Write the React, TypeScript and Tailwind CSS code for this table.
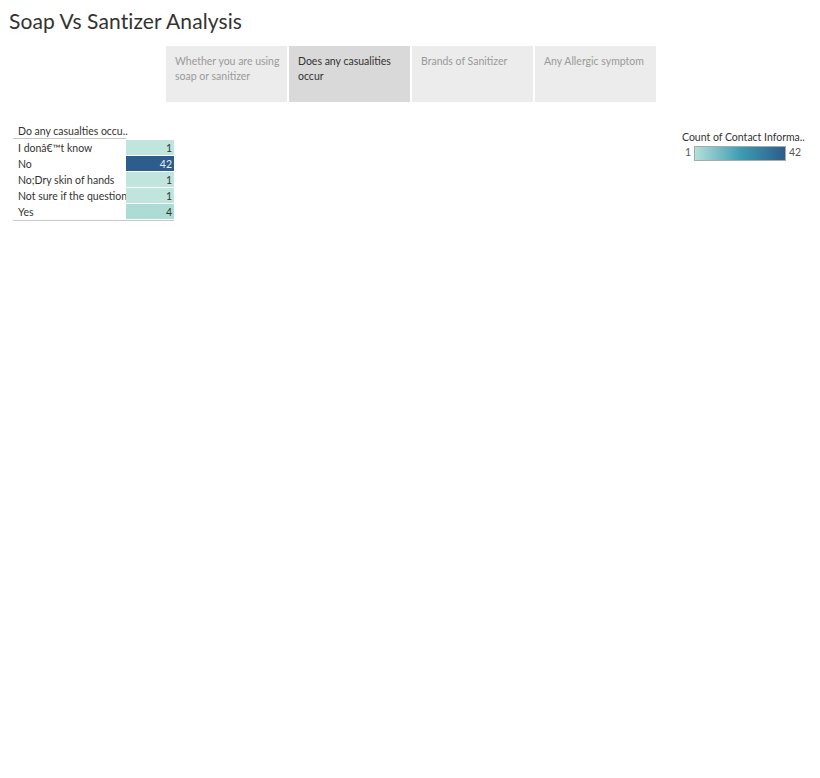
import React from "react";

const tabs = [
  { label: "Whether you are using soap or sanitizer", active: false },
  { label: "Does any casualities occur", active: true },
  { label: "Brands of Sanitizer", active: false },
  { label: "Any Allergic symptom", active: false },
];

const rows = [
  { label: "I donâ€™t know", value: "1", cls: "bg-[#bfe5dc] text-[#333333]" },
  { label: "No", value: "42", cls: "bg-[#2c5d8c] text-[#e8eef4]" },
  { label: "No;Dry skin of hands", value: "1", cls: "bg-[#bfe5dc] text-[#333333]" },
  { label: "Not sure if the question", value: "1", cls: "bg-[#bfe5dc] text-[#333333]" },
  { label: "Yes", value: "4", cls: "bg-[#acdcd4] text-[#333333]" },
];

export default function App() {
  return (
    <div className="w-[820px] h-[778px] bg-white font-['Lato',sans-serif] text-[#333333]">
      <div className="pl-[9px] pt-[8px] h-[46px] text-[21px] leading-[26px] tracking-[0.1px] text-[#333333]">
        Soap Vs Santizer Analysis
      </div>
      <div className="flex gap-[2px] ml-[166px] h-[56px]">
        {tabs.map((t, i) => (
          <div
            key={i}
            className={`w-[121px] pl-[9px] pr-[6px] pt-[8px] text-[10.5px] leading-[15px] ${
              t.active ? "bg-[#d9d9d9] text-[#333333]" : "bg-[#ececec] text-[#9a9a9a]"
            }`}
          >
            {t.label}
          </div>
        ))}
      </div>
      <div className="flex justify-between mt-[22px] pr-[18px]">
        <div className="ml-[13px] text-[10.5px]">
          <div className="flex">
            <div className="w-[113px] pl-[5px] h-[15px] leading-[14px] whitespace-nowrap border-b border-[#c8c8c8]">
              Do any casualties occu..
            </div>
          </div>
          <div className="border-b border-[#c8c8c8] mt-[1px]">
            {rows.map((r, i) => (
              <div key={i} className="flex h-[16px]">
                <div className="w-[113px] pl-[5px] leading-[16px] whitespace-nowrap">
                  {r.label}
                </div>
                <div
                  className={`w-[48px] text-right pr-[2px] leading-[16px] border-b border-white ${r.cls}`}
                >
                  {r.value}
                </div>
              </div>
            ))}
          </div>
        </div>
        <div className="w-[120px] mt-[6px] text-[10.5px]">
          <div className="leading-[14px] whitespace-nowrap">Count of Contact Informa..</div>
          <div className="flex items-center mt-[1px] h-[16px]">
            <div className="w-[12px] text-right pr-[3px] text-[#555555]">1</div>
            <div className="w-[92px] h-[15px] border border-[#a9a9a9] bg-gradient-to-r from-[#b3e0d8] via-[#3e9db4] to-[#2c5d8c]"></div>
            <div className="pl-[3px] text-[#555555]">42</div>
          </div>
        </div>
      </div>
    </div>
  );
}
